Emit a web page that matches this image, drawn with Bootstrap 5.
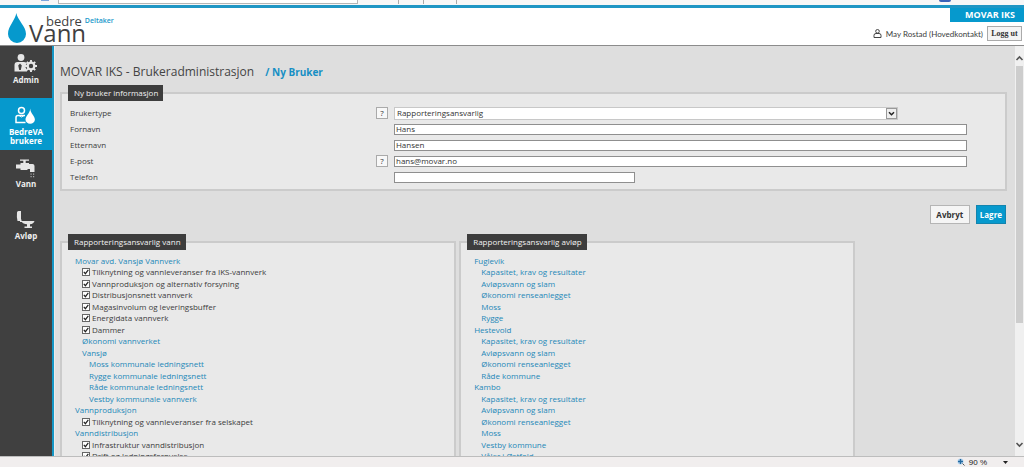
<!DOCTYPE html>
<html lang="no">
<head>
<meta charset="utf-8">
<meta name="viewport" content="width=device-width, initial-scale=1">
<title>bedreVann – Ny bruker</title>
<link href="https://cdn.jsdelivr.net/npm/bootstrap@5.3.0/dist/css/bootstrap.min.css" rel="stylesheet">
<style>
:root{--bv-blue:#0699cd;--bv-dark:#404040}
body{font-family:"Open Sans","Liberation Sans",sans-serif;font-size:8px;line-height:12px;color:#3c3c3c;background:#dedede}
a{color:#2488b8;text-decoration:none}
.browser-strip{height:5px;background:#f7f7f7}
.address-bar{width:300px;margin-left:9px;background:#fff;border:1px solid #b5b5b5;border-top:0;height:4px}
.tab-edge{width:1px;height:4px;background:#aaa}
.strip-mark{width:8px;height:1px;background:#7da5dc;margin-left:41px}
.strip-dot{width:12px;height:2px;background:#3b62b8;border-radius:0 0 6px 6px;margin-right:73px}
.topbar{height:41px;background:#fff;border-top:3px solid #1f96c4;border-bottom:1px solid #8c8c8c}
.brand-mark{padding:4px 0 0 7px}
.brand-drop{width:20px;height:32px}
.brand-text{padding-top:3px;margin-left:2px;color:#3f3f41}
.brand-top{font-size:13px;line-height:12px;padding-left:17px;font-weight:500}
.brand-top small{font-size:7px;font-weight:600;color:#1c9acb;margin-left:3px}
.brand-main{font-size:24px;line-height:12px}
.org-tag{background:var(--bv-blue);color:#fff;font-size:9px;font-weight:700;line-height:14px;padding:0 9px 0 15px}
.user-name{font-family:Lato,"Open Sans",sans-serif;font-size:8px}
.btn-logout{font:700 8px/11px "Liberation Serif",serif;color:#333;background:#f4f4f4;border:1px solid #aaa;border-radius:0;padding:1px 0;width:35px;height:15px;margin-right:2px;white-space:nowrap}
.sidebar{width:54px;background:var(--bv-dark);border-right:2px solid #1597c6}
.side-item{height:52px;padding-top:7px;color:#eee;font-weight:700;line-height:9px;text-align:center}
.side-item svg{width:28px;height:22px}
.side-item.active{background:var(--bv-blue);color:#fff}
.content-area{border-left:1px solid #ebebeb;padding:20px 8px 0 5px}
h1{font-size:12px;line-height:12px;margin:0;color:#444}
h1 span{font-size:10px;font-weight:700;color:#168fc4}
.panel{position:relative;min-width:0;background:#e9e9e9;border:2px solid #cbcbcb}
.panel-title{position:absolute;left:6px;top:-9px;width:auto;margin:0;padding:0 5px 0 6px;background:#3d3d3d;color:#f2f2f2;font-size:8px;line-height:16px;white-space:nowrap}
.form-panel{margin-top:14px;padding:11px 38px 4px 8px}
.field{height:16px}
.field>label{width:34%}
.help-slot{width:19px}
.btn-help{width:12px;height:12px;margin-left:1px;padding:0;border:1px solid #aaa;background:#f8f8f8;color:#333;font-size:8px;line-height:10px;border-radius:0}
.field .form-control,.field .form-select{height:11px;min-height:0;padding:0 0 1px 1px;font-size:8px;line-height:8px;color:#333;border:1px solid #8f8f8f;border-radius:0;background-color:#fff}
.field .form-select{height:13px;line-height:10px;width:88%;padding-left:2px;border-color:#c8c8c8;background-size:11px 11px;background-position:right 0 center;background-image:url("data:image/svg+xml,%3Csvg xmlns='http://www.w3.org/2000/svg' viewBox='0 0 11 11'%3E%3Crect x='.5' y='.5' width='10' height='10' fill='%23eee' stroke='%23999'/%3E%3Cpath d='M3 4.3 5.5 6.8 8 4.3' fill='none' stroke='%23222' stroke-width='1.5'/%3E%3C/svg%3E")}
.field .phone{width:42%}
.actions{padding:14px 1px 16px 0;gap:6px}
.actions .btn{font-size:8px;font-weight:700;line-height:12px;border-radius:0;padding:2px 3px;height:19px;margin-bottom:1px}
.btn-cancel,.btn-cancel:hover{background:#f5f5f5;border:1px solid #b5b5b5;color:#333;min-width:40px}
.btn-save,.btn-save:hover{background:var(--bv-blue);border:1px solid #1384ae;color:#fff;min-width:30px}
.panels{display:grid;grid-template-columns:8fr 8fr 3fr;gap:3px}
.tree{margin:0;padding:12px 0 40px 13px;list-style:none}
.tree li{height:11px;line-height:11px;white-space:nowrap}
.tree li:nth-child(even){height:12px;line-height:12px}
.tree .lv2{padding-left:7px}
.tree .lv3{padding-left:14px}
.tree label{display:flex;align-items:center;gap:2px;height:100%}
.tree input{appearance:none;width:8px;height:8px;margin:0;border:1px solid #666;background:#fff}
.tree input:checked{background:#fff url("data:image/svg+xml,%3Csvg xmlns='http://www.w3.org/2000/svg' viewBox='0 0 6 6'%3E%3Cpath d='M.8 2.8 2.4 4.7 5.3 .9' fill='none' stroke='%23222' stroke-width='1.2'/%3E%3C/svg%3E") center/6px no-repeat}
.scroll-rail{width:9px;background:#f0f0f0}
.scroll-rail svg{width:9px;height:20px}
.scroll-track{margin:0 1px 3px}
.scroll-thumb{height:70%;background:#cdcdcd}
.statusbar{height:11px;background:#f1eeee;border-top:1px solid #bdbdbd;font-family:"Liberation Sans",sans-serif;color:#222;line-height:11px}
.statusbar .zoom{font-size:8px}
</style>
</head>
<body class="vh-100 overflow-hidden d-flex flex-column">
<div class="browser-strip d-flex flex-shrink-0">
  <div class="strip-mark"></div><div class="address-bar"></div>
  <div class="d-flex ms-4 ps-3"><i class="tab-edge me-4"></i><i class="tab-edge me-4"></i><i class="tab-edge ms-2"></i></div>
  <div class="strip-dot ms-auto"></div>
</div>
<header class="topbar d-flex flex-shrink-0 justify-content-between">
  <div class="brand-mark d-flex">
    <svg class="brand-drop" viewBox="0 0 20 32"><path d="M9.300 1C8.500 8 1 14 1 22a9 9 0 0 0 18 0C19 14 10.300 8 9.300 1z" fill="#0699cd"/></svg>
    <div class="brand-text text-nowrap">
      <div class="brand-top d-flex">bedre <small>Deltaker</small></div>
      <div class="brand-main">Vann</div>
    </div>
  </div>
  <div class="d-flex flex-column align-items-end justify-content-between">
    <div class="org-tag">MOVAR IKS</div>
    <div class="d-flex align-items-center pb-1 mb-n1">
      <svg width="9" height="9" viewBox="0 0 9 9" fill="none" stroke="#444"><circle cx="4.500" cy="2.300" r="1.800"/><path d="M1 8.500V6.300Q1 4.500 3 4.500H6Q8 4.500 8 6.300V8.500z"/></svg>
      <span class="user-name mx-1 ps-0">May Rostad (Hovedkontakt)</span>
      <button type="button" class="btn btn-logout">Logg ut</button>
    </div>
  </div>
</header>
<div class="d-flex flex-grow-1 overflow-hidden">
  <nav class="sidebar flex-shrink-0">
    <a href="#" class="side-item d-block"><svg viewBox="0 0 28 22" fill="#e6e6e6"><circle cx="9" cy="4.500" r="3.400"/><path d="M2.500 18.500V12Q2.500 9 5.500 9H12Q14.500 9 15 10.500L12.800 13 15 17V18.500z"/><path d="M8 10.500l1.800 2-1 4.500h-1.600l-1-4.500z" fill="#404040"/><circle cx="19" cy="13" r="3.300" fill="none" stroke="#e6e6e6" stroke-width="2.400"/><path d="M19 7v12M13 13h12M14.800 8.800l8.400 8.400M23.200 8.800l-8.400 8.400" stroke="#e6e6e6" stroke-width="1.900"/><circle cx="19" cy="13" r="2.200" fill="#404040"/></svg><div>Admin</div></a>
    <a href="#" class="side-item active d-block"><svg viewBox="0 0 28 22" fill="none" stroke="#fff" stroke-width="1.500"><circle cx="9.500" cy="5.500" r="3"/><path d="M13 10.500H6Q4 10.500 4 12.500V17.500H13.500"/><path d="M7 10.500q2.500 3 5 0" stroke-width="1"/><path d="M18.200 3.500C18 8.500 13.500 11 13.500 14.500a4.700 4.300 0 0 0 9.400 0C22.900 11 18.400 8.500 18.200 3.500z" fill="#fff" stroke="none"/></svg><div>BedreVA<br>brukere</div></a>
    <a href="#" class="side-item d-block"><svg viewBox="0 0 28 22" fill="#e6e6e6"><path d="M8 2.500h9v1.200h-3.300V6H17v1h3.500q2 0 2 2v6H18v-3H15.500v1H8.500v-1.500H4V7.500H8.500V6h2.800V3.700H8z"/><path d="M18.500 16.500h1.200v1.200h-1.200zM21 16.500h1.200v1.200H21zM18.500 19h1.200v1.200h-1.200zM21 19h1.200v1.200H21z" fill="#aaa"/></svg><div>Vann</div></a>
    <a href="#" class="side-item d-block"><svg viewBox="0 0 28 22" fill="#e6e6e6"><path d="M5 3.500Q5 2 6.500 2H9v10H5.500Q4.500 8 5 3.500zM8 10.500h1.500V12H22.500q-.8 3-4.500 3.200V17.500h2v1.500h-7.500v-1.500h2.500V15.200q-4-.2-5-2.200H8z"/></svg><div>Avløp</div></a>
  </nav>
  <main class="content-area flex-grow-1 overflow-hidden">
    <h1>MOVAR IKS - Brukeradministrasjon <span class="ms-2">/ Ny Bruker</span></h1>
    <form>
      <fieldset class="panel form-panel">
        <legend class="panel-title">Ny bruker informasjon</legend>
        <div class="field d-flex align-items-center"><label for="type">Brukertype</label><div class="help-slot d-flex"><button type="button" class="btn-help">?</button></div><div class="flex-grow-1 d-flex"><select id="type" class="form-select"><option>Rapporteringsansvarlig</option></select></div></div>
        <div class="field d-flex align-items-center"><label for="fn">Fornavn</label><div class="help-slot"></div><div class="flex-grow-1 d-flex"><input id="fn" class="form-control" value="Hans"></div></div>
        <div class="field d-flex align-items-center"><label for="en">Etternavn</label><div class="help-slot"></div><div class="flex-grow-1 d-flex"><input id="en" class="form-control" value="Hansen"></div></div>
        <div class="field d-flex align-items-center"><label for="ep">E-post</label><div class="help-slot d-flex"><button type="button" class="btn-help">?</button></div><div class="flex-grow-1 d-flex"><input id="ep" class="form-control" value="hans@movar.no"></div></div>
        <div class="field d-flex align-items-center"><label for="tlf">Telefon</label><div class="help-slot"></div><div class="flex-grow-1 d-flex"><input id="tlf" class="form-control phone"></div></div>
      </fieldset>
      <div class="actions d-flex justify-content-end"><button type="button" class="btn btn-cancel">Avbryt</button><button type="submit" class="btn btn-save">Lagre</button></div>
      <div class="panels">
        <fieldset class="panel">
          <legend class="panel-title">Rapporteringsansvarlig vann</legend>
          <ul class="tree">
            <li><a href="#">Movar avd. Vansjø Vannverk</a></li>
            <li class="lv2"><label><input type="checkbox" checked>Tilknytning og vannleveranser fra IKS-vannverk</label></li>
            <li class="lv2"><label><input type="checkbox" checked>Vannproduksjon og alternativ forsyning</label></li>
            <li class="lv2"><label><input type="checkbox" checked>Distribusjonsnett vannverk</label></li>
            <li class="lv2"><label><input type="checkbox" checked>Magasinvolum og leveringsbuffer</label></li>
            <li class="lv2"><label><input type="checkbox" checked>Energidata vannverk</label></li>
            <li class="lv2"><label><input type="checkbox" checked>Dammer</label></li>
            <li class="lv2"><a href="#">Økonomi vannverket</a></li>
            <li class="lv2"><a href="#">Vansjø</a></li>
            <li class="lv3"><a href="#">Moss kommunale ledningsnett</a></li>
            <li class="lv3"><a href="#">Rygge kommunale ledningsnett</a></li>
            <li class="lv3"><a href="#">Råde kommunale ledningsnett</a></li>
            <li class="lv3"><a href="#">Vestby kommunale vannverk</a></li>
            <li><a href="#">Vannproduksjon</a></li>
            <li class="lv2"><label><input type="checkbox" checked>Tilknytning og vannleveranser fra selskapet</label></li>
            <li><a href="#">Vanndistribusjon</a></li>
            <li class="lv2"><label><input type="checkbox" checked>Infrastruktur vanndistribusjon</label></li>
            <li class="lv2"><label><input type="checkbox" checked>Drift og ledningsfornyelse</label></li>
          </ul>
        </fieldset>
        <fieldset class="panel">
          <legend class="panel-title">Rapporteringsansvarlig avløp</legend>
          <ul class="tree">
            <li><a href="#">Fuglevik</a></li>
            <li class="lv2"><a href="#">Kapasitet, krav og resultater</a></li>
            <li class="lv2"><a href="#">Avløpsvann og slam</a></li>
            <li class="lv2"><a href="#">Økonomi renseanlegget</a></li>
            <li class="lv2"><a href="#">Moss</a></li>
            <li class="lv2"><a href="#">Rygge</a></li>
            <li><a href="#">Hestevold</a></li>
            <li class="lv2"><a href="#">Kapasitet, krav og resultater</a></li>
            <li class="lv2"><a href="#">Avløpsvann og slam</a></li>
            <li class="lv2"><a href="#">Økonomi renseanlegget</a></li>
            <li class="lv2"><a href="#">Råde kommune</a></li>
            <li><a href="#">Kambo</a></li>
            <li class="lv2"><a href="#">Kapasitet, krav og resultater</a></li>
            <li class="lv2"><a href="#">Avløpsvann og slam</a></li>
            <li class="lv2"><a href="#">Økonomi renseanlegget</a></li>
            <li class="lv2"><a href="#">Moss</a></li>
            <li class="lv2"><a href="#">Vestby kommune</a></li>
            <li class="lv2"><a href="#">Våler i Østfold</a></li>
          </ul>
        </fieldset>
      </div>
    </form>
  </main>
  <div class="scroll-rail d-flex flex-column flex-shrink-0">
    <svg viewBox="0 0 9 20" fill="none" stroke="#555" stroke-width="1.600"><path d="M1.500 14 4.500 11l3 3"/></svg>
    <div class="scroll-track flex-grow-1"><div class="scroll-thumb"></div></div>
    <svg viewBox="0 0 9 20" fill="none" stroke="#555" stroke-width="1.600"><path d="M1.500 7 4.500 10l3-3"/></svg>
  </div>
</div>
<footer class="statusbar d-flex flex-shrink-0 justify-content-end align-items-center">
  <svg width="8" height="8" viewBox="0 0 8 8"><circle cx="3.500" cy="3.500" r="3" fill="#b5d3ee"/><path d="M3.500 1v5M1 3.500h5" stroke="#23699f" stroke-width="1.400"/><path d="M5.500 5.500l2 2" stroke="#555"/></svg>
  <span class="zoom ms-1">90 %</span>
  <svg class="ms-3 me-3" width="5" height="3" viewBox="0 0 5 3"><path d="M0 0h5L2.500 3z" fill="#222"/></svg>
</footer>
<script src="https://cdn.jsdelivr.net/npm/bootstrap@5.3.0/dist/js/bootstrap.bundle.min.js"></script>
</body>
</html>
